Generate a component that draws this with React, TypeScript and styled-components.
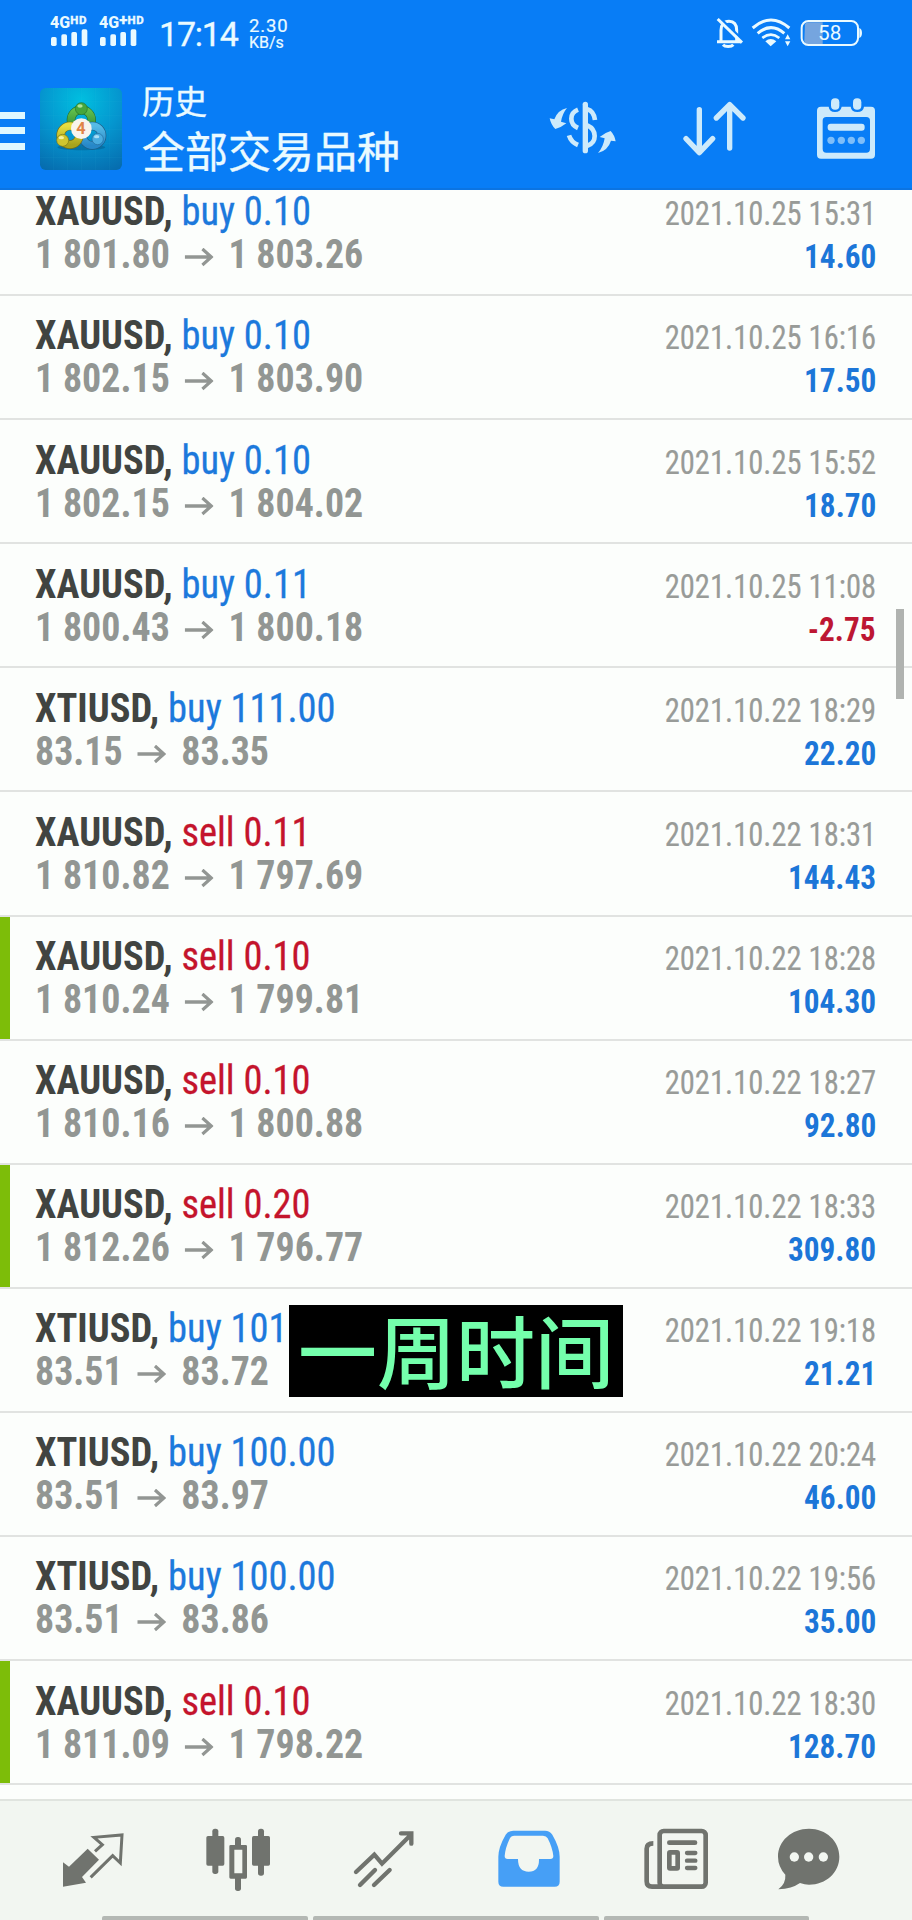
import React from 'react';
import styled, { createGlobalStyle } from 'styled-components';

const Global = createGlobalStyle`
  * { box-sizing: border-box; }
  body { margin: 0; background: #fcfefc; }
`;

const Screen = styled.div`
  width: 912px;
  height: 1920px;
  display: flex;
  flex-direction: column;
  overflow: hidden;
  background: #fcfefc;
  font-family: Roboto, 'Noto Sans CJK SC', sans-serif;
`;

const Header = styled.header`
  position: relative;
  z-index: 1;
  flex: none;
  height: 190px;
  background: #087df6;
  border-bottom: 2px solid #0b74e2;
  color: #eafaff;
`;

const StatusBar = styled.div`
  height: 66px;
  display: flex;
  justify-content: space-between;
  padding: 0 47px 0 50px;
`;

const StatusGroup = styled.div`
  display: flex;
  align-items: flex-start;
`;

const Signal = styled.div<{ $width: number }>`
  width: ${(p) => p.$width}px;
  padding-top: 15px;
  white-space: nowrap;
`;

const Network = styled.div`
  display: flex;
  height: 14px;
  font: 800 16px/15px Roboto, sans-serif;
`;

const NetworkSup = styled.span`
  font-size: 11.5px;
  line-height: 11px;
  letter-spacing: 0.7px;
  -webkit-text-stroke: 0.3px #eafaff;
`;

const NetworkPlus = styled(NetworkSup)`
  font-size: 15px;
  line-height: 10px;
  letter-spacing: 0.3px;
`;

const Clock = styled.div`
  width: 90px;
  font-size: 34px;
  line-height: 40px;
  padding-top: 14px;
  letter-spacing: -1.2px;
  margin-left: -1px;
  -webkit-text-stroke: 0.3px #eafaff;
`;

const Speed = styled.div`
  padding-top: 17px;
  font-size: 18.5px;
  line-height: 18px;
  letter-spacing: 0.9px;
  -webkit-text-stroke: 0.2px #eafaff;
`;

const SpeedUnit = styled.div`
  font-size: 16px;
  line-height: 16px;
  letter-spacing: 0;
`;

const AppBar = styled.div`
  height: 122px;
  display: flex;
`;

const MenuButton = styled.div`
  width: 40px;
  padding-top: 46px;
  display: flex;
  flex-direction: column;
  gap: 8.6px;
`;

const MenuLine = styled.div`
  width: 25px;
  height: 6.8px;
  background: #dff8ff;
`;

const Logo = styled.svg`
  width: 82px;
  height: 82px;
  margin-top: 22px;
`;

const Titles = styled.div`
  flex: 1;
  padding: 12px 0 0 20px;
  font-family: 'Noto Sans CJK SC', sans-serif;
  -webkit-text-stroke: 0.4px #eafaff;
`;

const Subtitle = styled.div`
  font-size: 32.5px;
  line-height: 43px;
`;

const Title = styled.div`
  font-size: 43px;
  line-height: 57px;
  white-space: nowrap;
`;

const Action = styled.div`
  width: 132px;
  display: flex;
  justify-content: center;
  padding-top: 26px;
`;

const ActionIcon = styled.svg`
  width: 72px;
  height: 72px;
`;

const Body = styled.main`
  position: relative;
  flex: 1;
  overflow: hidden;
`;

const List = styled.div`
  margin-top: -18px;
`;

const Row = styled.div<{ $marked?: boolean }>`
  height: 124.1px;
  padding: 18.4px 36px 0 35px;
  border-bottom: 2px solid #e1e3e1;
  background: ${(p) => (p.$marked ? 'linear-gradient(#7dbd09, #7dbd09) 0 0 / 10px 100% no-repeat padding-box' : 'none')};
`;

const Line = styled.div`
  height: 43px;
  display: flex;
  align-items: baseline;
  justify-content: space-between;
  line-height: 43px;
  font-stretch: 75%;
  white-space: pre;
`;

const Deal = styled.div`
  font-size: 40.8px;
  transform: scaleX(0.942);
  transform-origin: left;
`;

const Ticker = styled.span`
  font-weight: 700;
  color: #414441;
`;

const Side = styled.span<{ $side: string }>`
  color: ${(p) => (p.$side === 'buy' ? '#1c79dc' : '#c4142c')};
  -webkit-text-stroke: 0.3px currentColor;
`;

const Prices = styled.div`
  display: flex;
  align-items: baseline;
  font-size: 40.8px;
  font-weight: 700;
  color: #929693;
  transform: scaleX(0.93);
  transform-origin: left;
`;

const PriceArrow = styled.svg`
  width: 31px;
  height: 20px;
  margin: 0 16px;
`;

const Time = styled.div`
  font-size: 33px;
  color: #989b98;
  transform: scaleX(0.927);
  transform-origin: right;
  -webkit-text-stroke: 0.2px currentColor;
`;

const Profit = styled.div<{ $loss: boolean }>`
  font-size: 33px;
  font-weight: 700;
  color: ${(p) => (p.$loss ? '#bd1733' : '#1c76d8')};
  transform: scaleX(0.947);
  transform-origin: right;
`;

const ScrollThumb = styled.div`
  position: absolute;
  top: 419px;
  right: 8px;
  width: 8px;
  height: 90px;
  background: #b0b3b0;
`;

const Caption = styled.div`
  position: absolute;
  left: 289px;
  top: 1115px;
  width: 334px;
  height: 92px;
  background: #000;
  color: #74ffac;
  font: 500 79px/87px 'Noto Sans CJK SC', sans-serif;
  text-align: center;
  white-space: nowrap;
`;

const TabBar = styled.nav`
  flex: none;
  height: 121px;
  border-top: 2px solid #e0e4df;
  background: #f2f6f1;
  display: flex;
  flex-direction: column;
  justify-content: space-between;
`;

const Tabs = styled.div`
  display: flex;
  padding: 9px 19px 0 20px;
`;

const Tab = styled.div`
  flex: 1;
  display: flex;
  justify-content: center;
`;

const TabIcon = styled.svg`
  flex: none;
  width: 96px;
  height: 96px;
`;

const Handles = styled.div`
  display: flex;
  gap: 5px;
  padding-left: 102px;
`;

const Handle = styled.div<{ $width: number }>`
  width: ${(p) => p.$width}px;
  height: 4px;
  border-radius: 2px 2px 0 0;
  background: #b4b8b4;
`;

type Trade = [string, 'buy' | 'sell', string, string, string, string, string, boolean?];

const trades: Trade[] = [
  ['XAUUSD', 'buy', '0.10', '1 801.80', '1 803.26', '2021.10.25 15:31', '14.60'],
  ['XAUUSD', 'buy', '0.10', '1 802.15', '1 803.90', '2021.10.25 16:16', '17.50'],
  ['XAUUSD', 'buy', '0.10', '1 802.15', '1 804.02', '2021.10.25 15:52', '18.70'],
  ['XAUUSD', 'buy', '0.11', '1 800.43', '1 800.18', '2021.10.25 11:08', '-2.75'],
  ['XTIUSD', 'buy', '111.00', '83.15', '83.35', '2021.10.22 18:29', '22.20'],
  ['XAUUSD', 'sell', '0.11', '1 810.82', '1 797.69', '2021.10.22 18:31', '144.43'],
  ['XAUUSD', 'sell', '0.10', '1 810.24', '1 799.81', '2021.10.22 18:28', '104.30', true],
  ['XAUUSD', 'sell', '0.10', '1 810.16', '1 800.88', '2021.10.22 18:27', '92.80'],
  ['XAUUSD', 'sell', '0.20', '1 812.26', '1 796.77', '2021.10.22 18:33', '309.80', true],
  ['XTIUSD', 'buy', '101', '83.51', '83.72', '2021.10.22 19:18', '21.21'],
  ['XTIUSD', 'buy', '100.00', '83.51', '83.97', '2021.10.22 20:24', '46.00'],
  ['XTIUSD', 'buy', '100.00', '83.51', '83.86', '2021.10.22 19:56', '35.00'],
  ['XAUUSD', 'sell', '0.10', '1 811.09', '1 798.22', '2021.10.22 18:30', '128.70', true],
];

const BarsSvg = styled.svg`
  display: block;
  width: 38px;
  height: 18px;
`;

const SignalBars = () => (
  <BarsSvg viewBox="0 0 114 54" fill="currentColor">
    <rect x="3" y="24" width="17" height="27" rx="5" />
    <rect x="34" y="16" width="17" height="35" rx="5" />
    <rect x="64" y="9" width="17" height="42" rx="5" />
    <rect x="95" y="1" width="17" height="50" rx="5" />
  </BarsSvg>
);

const StatusSvg = styled.svg`
  width: 150px;
  height: 36px;
  margin-top: 16px;
`;

const StatusIcons = () => (
  <StatusSvg viewBox="776 48 450 108" fill="none" stroke="#eafaff" strokeWidth="9">
    <path d="M794 122V91c0-16 8-27 24-27s23 11 23 27v31M782 125h72" />
    <path d="M800 134a17 9 0 0 0 31 0" />
    <path d="M792 55l66 64" stroke="#087df6" strokeWidth="8" />
    <path d="M784 57l73 71" />
    <path d="M889 84q55-48 110 0" />
    <path d="M904 100q40-34 80 0" />
    <path d="M918 114q26-20 51 0" strokeWidth="8" />
    <path d="M927 124q16-14 33 0l-17 15z" fill="#eafaff" stroke="none" />
    <path d="M986 118l8-15 8 15zM986 124l8 15 8-15z" fill="#eafaff" stroke="none" />
    <path d="M1046 73q2-6 10-6h43v66h-43q-12 0-12-12z" fill="#75a5df" stroke="none" />
    <rect x="1036" y="63" width="169" height="72" rx="20" strokeWidth="6" />
    <path d="M1209 84q8 3 8 15t-8 15z" fill="#eafaff" stroke="none" />
    <text x="1120" y="121" textAnchor="middle" fontFamily="Roboto, sans-serif" fontSize="62" fill="#eafaff" stroke="none">58</text>
  </StatusSvg>
);

const AppLogo = () => (
  <Logo viewBox="0 0 246 246">
    <defs>
      <radialGradient id="bg" cx=".5" cy=".15" r=".95">
        <stop offset="0" stopColor="#00bfe0" />
        <stop offset=".5" stopColor="#0596cf" />
        <stop offset="1" stopColor="#066cae" />
      </radialGradient>
      <linearGradient id="green" x2="0" y2="1">
        <stop stopColor="#62c04c" />
        <stop offset="1" stopColor="#2b8735" />
      </linearGradient>
      <linearGradient id="yellow" x2="0" y2="1">
        <stop stopColor="#e6de40" />
        <stop offset="1" stopColor="#a8a31b" />
      </linearGradient>
      <linearGradient id="blue" x2="0" y2="1">
        <stop stopColor="#56bbe6" />
        <stop offset="1" stopColor="#2788c8" />
      </linearGradient>
    </defs>
    <rect width="246" height="246" rx="17" fill="url(#bg)" />
    <path d="M40 0v246M82 0v246M124 0v246M166 0v246M208 0v246M0 40h246M0 82h246M0 124h246M0 166h246M0 208h246" stroke="#3cc2e5" strokeOpacity=".12" strokeWidth="2" />
    <ellipse cx="124" cy="178" rx="72" ry="9" fill="#045482" opacity=".45" />
    <circle cx="124" cy="96" r="31" fill="none" stroke="#236c31" strokeWidth="26" />
    <circle cx="124" cy="96" r="31" fill="none" stroke="url(#green)" strokeWidth="22" />
    <circle cx="157" cy="143" r="29" fill="none" stroke="#205d86" strokeWidth="26" />
    <circle cx="157" cy="143" r="29" fill="none" stroke="url(#blue)" strokeWidth="22" />
    <circle cx="90" cy="142" r="28" fill="none" stroke="#706e1c" strokeWidth="26" />
    <circle cx="90" cy="142" r="28" fill="none" stroke="url(#yellow)" strokeWidth="22" />
    <circle cx="124" cy="62" r="18" fill="#46a63c" stroke="#25742d" strokeWidth="2" />
    <ellipse cx="120" cy="54" rx="8" ry="5" fill="#b0e39a" />
    <circle cx="68" cy="157" r="18" fill="#cec52f" stroke="#777217" strokeWidth="2" />
    <ellipse cx="64" cy="149" rx="8" ry="5" fill="#f5f0a0" />
    <circle cx="173" cy="153" r="17" fill="#4bade0" stroke="#236c9d" strokeWidth="2" />
    <ellipse cx="170" cy="146" rx="8" ry="5" fill="#a8def5" />
    <circle cx="124" cy="122" r="31" fill="#f8f4ed" />
    <text x="123" y="139" textAnchor="middle" fontFamily="Roboto, sans-serif" fontWeight="700" fontSize="49" fill="#e08348">4</text>
  </Logo>
);

const ExchangeIcon = () => (
  <ActionIcon viewBox="270 276 216 216" fill="none" stroke="#cdeafb" strokeWidth="14">
    <path d="M388 313v139" strokeWidth="16" strokeLinecap="round" />
    <path d="M366 329q-20 8-20 27t20 28M339 406q6 20 27 29" />
    <path d="M394 328q19 5 23 32M394 376q22 10 22 32t-22 29" />
    <path d="M333 324q-28 6-38 34l-14-3q4 20 17 32 17-4 33-17l-16-5q4-24 18-41z" fill="#cdeafb" stroke="none" />
    <path d="M426 459q30-8 39-37l14 2q-3-18-15-31-18 5-33 18l15 4q-4 26-20 44z" fill="#cdeafb" stroke="none" />
  </ActionIcon>
);

const SortIcon = () => (
  <ActionIcon viewBox="666 276 216 216" fill="none" stroke="#cdeafb" strokeWidth="16" strokeLinecap="round" strokeLinejoin="round">
    <path d="M730 329v128M690 416l40 42 40-42M821 444V314M781 354l40-40 40 40" />
  </ActionIcon>
);

const CalendarIcon = () => (
  <ActionIcon viewBox="1062 276 216 216" fill="#cdeafb">
    <path fillRule="evenodd" d="M1095 320h23q2 16 19 16t20-16h27q2 16 20 16t20-16h21q12 0 12 12v132q0 12-12 12h-150q-12 0-12-12V332q0-12 12-12zm16 31q-11 0-11 11v84q0 12 11 12h120q11 0 11-12v-84q0-11-11-11z" />
    <rect x="1125" y="295" width="25" height="34" rx="12" />
    <rect x="1191" y="295" width="25" height="34" rx="12" />
    <rect x="1115" y="371" width="111" height="21" rx="9" />
    <g opacity=".6">
      <circle cx="1125" cy="421" r="11" />
      <circle cx="1156" cy="421" r="11" />
      <circle cx="1186" cy="421" r="11" />
      <circle cx="1216" cy="421" r="11" />
    </g>
  </ActionIcon>
);

const gray = '#70736e';

const App = () => (
  <>
    <Global />
    <Screen>
      <Header>
        <StatusBar>
          <StatusGroup>
            <Signal $width={49}>
              <Network>4G<NetworkSup>HD</NetworkSup></Network>
              <SignalBars />
            </Signal>
            <Signal $width={61}>
              <Network>4G<NetworkPlus>+</NetworkPlus><NetworkSup>HD</NetworkSup></Network>
              <SignalBars />
            </Signal>
            <Clock>17:14</Clock>
            <Speed>
              2.30
              <SpeedUnit>KB/s</SpeedUnit>
            </Speed>
          </StatusGroup>
          <StatusIcons />
        </StatusBar>
        <AppBar>
          <MenuButton>
            <MenuLine />
            <MenuLine />
            <MenuLine />
          </MenuButton>
          <AppLogo />
          <Titles>
            <Subtitle>历史</Subtitle>
            <Title>全部交易品种</Title>
          </Titles>
          <Action><ExchangeIcon /></Action>
          <Action><SortIcon /></Action>
          <Action><CalendarIcon /></Action>
        </AppBar>
      </Header>

      <Body>
        <List>
          {trades.map(([ticker, side, volume, open, close, time, profit, marked], i) => (
            <Row key={i} $marked={marked}>
              <Line>
                <Deal>
                  <Ticker>{ticker}, </Ticker>
                  <Side $side={side}>{side} {volume}</Side>
                </Deal>
                <Time>{time}</Time>
              </Line>
              <Line>
                <Prices>
                  <span>{open}</span>
                  <PriceArrow viewBox="0 0 31 20" fill="none" stroke="currentColor" strokeWidth="3.4">
                    <path d="M0 9h28M19 1l9.5 8-9.5 8" />
                  </PriceArrow>
                  <span>{close}</span>
                </Prices>
                <Profit $loss={profit.startsWith('-')}>{profit}</Profit>
              </Line>
            </Row>
          ))}
        </List>
        <ScrollThumb />
        <Caption>一周时间</Caption>
      </Body>

      <TabBar>
        <Tabs>
          <Tab>
            <TabIcon viewBox="134 121 288 288" fill={gray}>
              <path d="M262 237l34 33-51 52 12 17-69 12V278l18 13z" />
              <path d="M284 245l22-20-25-22 84-7-5 84-23-22-66 65" fill="none" stroke={gray} strokeWidth="9" />
            </TabIcon>
          </Tab>
          <Tab>
            <TabIcon viewBox="569 121 288 288" fill={gray}>
              <rect x="636" y="177" width="18" height="136" rx="8" />
              <rect x="618" y="199" width="54" height="89" rx="5" />
              <rect x="773" y="177" width="18" height="141" rx="8" />
              <rect x="755" y="199" width="54" height="89" rx="5" />
              <rect x="704" y="202" width="18" height="36" rx="8" />
              <rect x="704" y="318" width="18" height="46" rx="8" />
              <path fillRule="evenodd" d="M691 226h45q4 0 4 4v93q0 4-4 4h-45q-4 0-4-4v-93q0-4 4-4zm11 14v71h24v-71z" />
            </TabIcon>
          </Tab>
          <Tab>
            <TabIcon viewBox="1006 121 288 288" fill="none" stroke={gray} strokeWidth="13" strokeLinecap="round">
              <path d="M1066 307l55-52 23 27 86-86M1201 191h31v31" />
              <path d="M1078 346l45-45M1120 346l47-45" />
            </TabIcon>
          </Tab>
          <Tab>
            <TabIcon viewBox="75 121 288 288" fill="#469ff6">
              <path fillRule="evenodd" d="M172 183h95q14 0 22 12 22 38 22 66v75q0 15-15 15H142q-15 0-15-15v-75q0-28 22-66 8-12 23-12zm3 15q-10 0-14 9-13 27-15 52 0 9 9 9h31q0 38 32 38t31-38h34q9 0 9-9-3-26-17-53-4-8-14-8z" />
            </TabIcon>
          </Tab>
          <Tab>
            <TabIcon viewBox="512 121 288 288" fill="none" stroke={gray} strokeWidth="14">
              <rect x="610" y="184" width="138" height="167" rx="12" />
              <path d="M591 221q-20 0-20 16v98q0 16 16 16h33" />
              <path d="M639 219h77" strokeLinecap="round" />
              <rect x="639" y="248" width="25" height="48" rx="2" />
              <path d="M692 250h25M692 273h25M692 295h25" strokeLinecap="round" strokeWidth="13" />
            </TabIcon>
          </Tab>
          <Tab>
            <TabIcon viewBox="949 121 288 288">
              <path d="M1060 177c51 0 91 37 91 84s-40 84-91 84q-13 0-27-5-24 17-65 19 23-17 21-44-22-24-22-54c0-47 41-84 93-84z" fill={gray} />
              <g fill="#f2f6f1">
                <circle cx="1016" cy="262" r="14" />
                <circle cx="1059" cy="262" r="14" />
                <circle cx="1103" cy="262" r="14" />
              </g>
            </TabIcon>
          </Tab>
        </Tabs>
        <Handles>
          <Handle $width={206} />
          <Handle $width={286} />
          <Handle $width={205} />
        </Handles>
      </TabBar>
    </Screen>
  </>
);

export default App;
